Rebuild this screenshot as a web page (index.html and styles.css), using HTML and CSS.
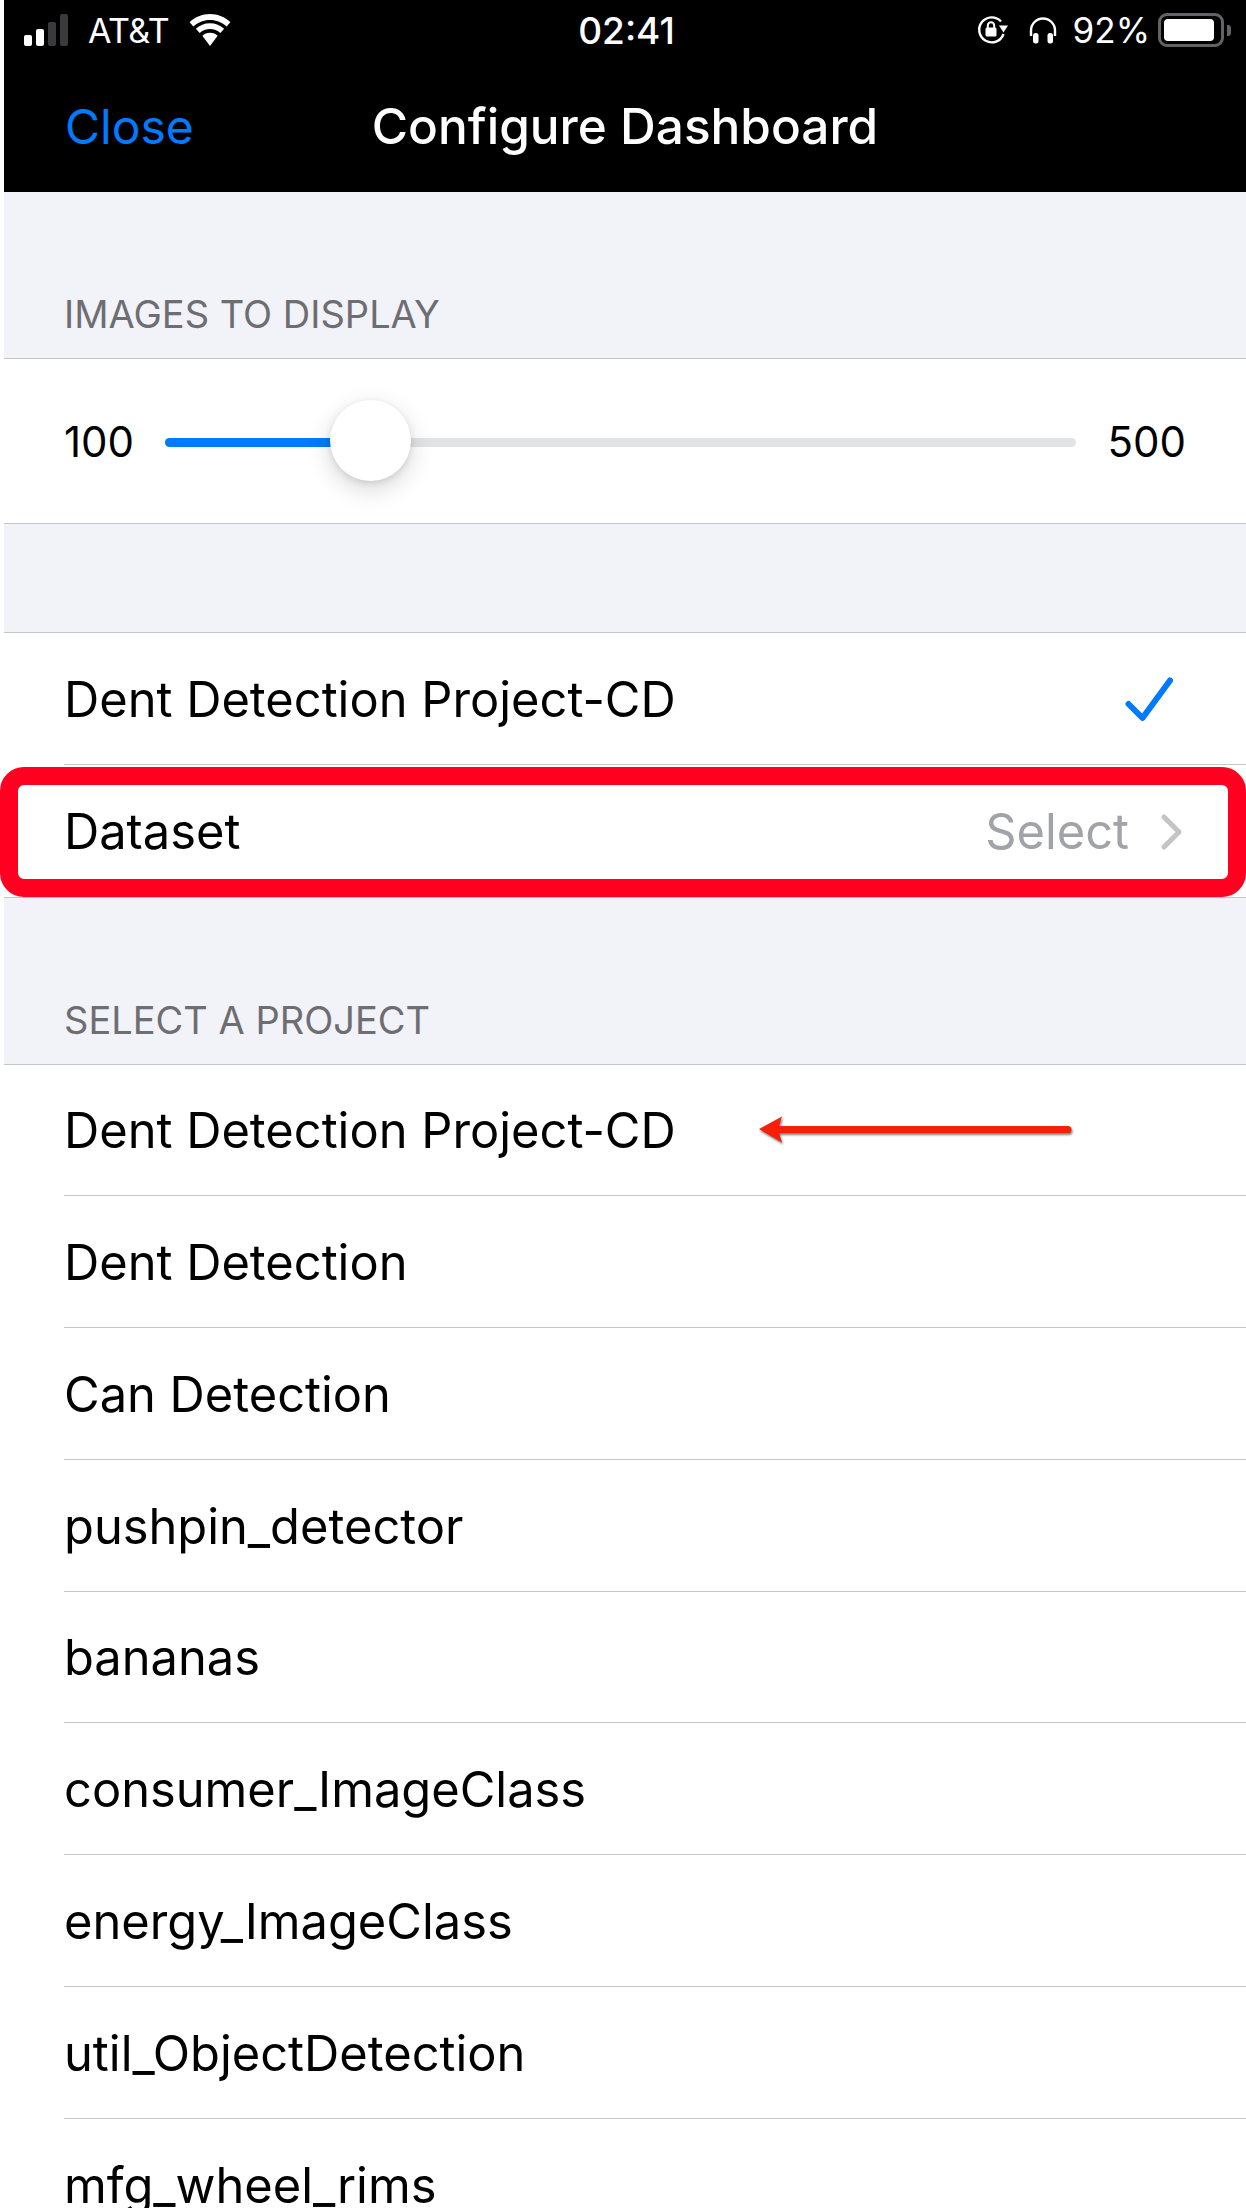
FILE: index.html
```html
<!DOCTYPE html>
<html lang="en">
  <head>
    <meta charset="UTF-8" />
    <meta name="viewport" content="width=device-width, initial-scale=1.0" />
    <title>Configure Dashboard</title>
    <link rel="stylesheet" href="styles.css">
  </head>
  <body>
    <header class="top">
      <div class="status">
        <div class="status-left">
          <span class="signal"><i class="on b1"></i><i class="on b2"></i><i class="b3"></i><i class="b4"></i></span>
          <span class="carrier">AT&amp;T</span>
          <svg class="wifi" width="46" height="34" viewBox="3 1 40 32">
            <path d="M23 7.500c6 0 11.500 2.300 15.600 6.200l3.600-4C37.100 4.800 30.400 2 23 2S8.900 4.800 3.800 9.700l3.600 4C11.500 9.800 17 7.500 23 7.500z" fill="#fff"/>
            <path d="M23 16c3.700 0 7.100 1.400 9.700 3.800l3.600-4C32.800 12.500 28.100 10.600 23 10.600s-9.800 1.900-13.300 5.200l3.600 4C15.900 17.400 19.300 16 23 16z" fill="#fff"/>
            <path d="M23 19.500c-2.800 0-5.300 1-7.200 2.800L23 32l7.200-9.700c-1.900-1.800-4.400-2.800-7.200-2.800z" fill="#fff"/>
          </svg>
        </div>
        <div class="clock">02:41</div>
        <div class="status-right">
          <svg class="rotlock" width="32" height="30" viewBox="0 0 32 30">
            <path d="M26.500 19A12.500 12.500 0 1 1 24 6.500" fill="none" stroke="#fff" stroke-width="2.400"/>
            <path d="M22 10.500h9l-4.500 7z" fill="#fff"/>
            <rect x="8.500" y="12.500" width="11" height="9" rx="1.500" fill="#fff"/>
            <path d="M10.800 13V10.500a3.200 3.200 0 0 1 6.400 0V13" fill="none" stroke="#fff" stroke-width="2"/>
          </svg>
          <svg class="phones" width="30" height="28" viewBox="0 0 30 28">
            <path d="M3 20V14.500a12 12 0 0 1 24 0V20" fill="none" stroke="#fff" stroke-width="2.400"/>
            <rect x="5" y="17" width="5.500" height="10.500" rx="2.500" fill="#fff"/>
            <rect x="19.500" y="17" width="5.500" height="10.500" rx="2.500" fill="#fff"/>
          </svg>
          <span class="pct">92%</span>
          <span class="battery"><span class="battery-fill"></span></span>
          <span class="battery-nub"></span>
        </div>
      </div>
      <div class="navbar">
        <a class="close">Close</a>
        <h1 class="title">Configure Dashboard</h1>
      </div>
    </header>

    <main>
      <div class="section-label first">IMAGES TO DISPLAY</div>
      <div class="group">
        <div class="slider-row">
          <span class="slider-val">100</span>
          <div class="slider">
            <div class="slider-done"></div>
            <div class="slider-thumb"></div>
          </div>
          <span class="slider-val">500</span>
        </div>
      </div>

      <div class="gap"></div>

      <div class="group">
        <div class="row">
          <div class="row-in">
            <span>Dent Detection Project-CD</span>
            <svg class="check" width="48" height="48" viewBox="0 0 48 48">
              <path d="M3.500 27l14 14L45 3.500" fill="none" stroke="#007aff" stroke-width="6" stroke-linecap="round" stroke-linejoin="round"/>
            </svg>
          </div>
        </div>
        <div class="row dataset">
          <div class="row-in">
            <span>Dataset</span>
            <span class="detail">Select</span>
            <svg class="chevron" width="24" height="38" viewBox="0 0 24 38">
              <path d="M4 4l15 15L4 34" fill="none" stroke="#c4c4c7" stroke-width="5" stroke-linecap="round" stroke-linejoin="round"/>
            </svg>
          </div>
          <div class="red-box"></div>
        </div>
      </div>

      <div class="section-label">SELECT A PROJECT</div>
      <div class="group">
        <div class="row">
          <div class="row-in">
            <span>Dent Detection Project-CD</span>
            <svg class="arrow" width="320" height="34" viewBox="0 0 320 34">
              <path d="M1 14L24 1.500l-3 9.500h289a3.500 3.500 0 0 1 0 7H21l3 9.500z" fill="#f61f08" class="arrow-shape"/>
            </svg>
          </div>
        </div>
        <div class="row"><div class="row-in"><span>Dent Detection</span></div></div>
        <div class="row"><div class="row-in"><span>Can Detection</span></div></div>
        <div class="row"><div class="row-in"><span>pushpin_detector</span></div></div>
        <div class="row"><div class="row-in"><span>bananas</span></div></div>
        <div class="row"><div class="row-in"><span>consumer_ImageClass</span></div></div>
        <div class="row"><div class="row-in"><span>energy_ImageClass</span></div></div>
        <div class="row"><div class="row-in"><span>util_ObjectDetection</span></div></div>
        <div class="row"><div class="row-in"><span>mfg_wheel_rims</span></div></div>
      </div>
    </main>
  </body>
</html>
```

FILE: styles.css
```css
/* page */
html, body {
  margin: 0;
  height: 2208px;
  overflow: hidden;
  background: #fff;
}
body {
  padding-left: 4px;
  box-sizing: border-box;
  font-family: Inter, "Liberation Sans", sans-serif;
  color: #000;
}

/* black header */
.top {
  background: #000;
  color: #fff;
  height: 192px;
}
.status {
  display: grid;
  grid-template-columns: 1fr auto 1fr;
  align-items: center;
  height: 60px;
  padding: 0 15px 0 20px;
}
.status-left, .status-right {
  display: flex;
  align-items: center;
}
.status-right {
  justify-content: flex-end;
}
.signal {
  display: flex;
  align-items: flex-end;
  gap: 4px;
  height: 32px;
}
.signal i {
  width: 8px;
  border-radius: 2px;
  background: #3a3a3c;
}
.signal .on {
  background: #fff;
}
.signal .b1 { height: 11px; }
.signal .b2 { height: 17px; }
.signal .b3 { height: 24px; }
.signal .b4 { height: 32px; }
.carrier {
  font-size: 34px;
  margin-left: 20px;
  letter-spacing: -0.5px;
}
.wifi {
  margin-left: 18px;
}
.clock {
  font-size: 37px;
  font-weight: 500;
  margin-right: 2px;
}
.rotlock {
  margin-right: 19px;
}
.phones {
  margin-right: 15px;
}
.pct {
  font-size: 35px;
  margin-right: 8px;
}
.battery {
  box-sizing: border-box;
  display: block;
  width: 66px;
  height: 34px;
  padding: 3px;
  border: 3px solid #636366;
  border-radius: 9px;
}
.battery-fill {
  display: block;
  height: 100%;
  width: 92%;
  background: #fff;
  border-radius: 4px;
}
.battery-nub {
  width: 4px;
  height: 11px;
  margin-left: 3px;
  background: #636366;
  border-radius: 0 3px 3px 0;
}
.navbar {
  display: grid;
  grid-template-columns: 1fr auto 1fr;
  align-items: center;
  height: 132px;
}
.close {
  color: #007aff;
  font-size: 48px;
  margin-left: 61px;
}
.title {
  margin: 0;
  font-size: 49.5px;
  font-weight: 500;
  grid-column: 2;
}

/* sections */
main {
  background: #f2f3f8;
}
.section-label {
  box-sizing: border-box;
  height: 166px;
  padding: 0 0 21px 60px;
  display: flex;
  align-items: flex-end;
  font-size: 38px;
  color: #6d6d72;
}
.gap {
  height: 108px;
}
.group {
  background: #fff;
  border-top: 1px solid #c6c6c8;
  border-bottom: 1px solid #c6c6c8;
}

/* slider */
.slider-row {
  display: flex;
  align-items: center;
  height: 164px;
  padding: 0 60px;
  font-size: 42px;
  gap: 31px;
}
.slider {
  position: relative;
  flex: 1;
  height: 9px;
  margin-top: 2px;
  border-radius: 5px;
  background: #e2e3e4;
}
.slider-done {
  width: 205px;
  height: 100%;
  background: #007aff;
  border-radius: 5px 0 0 5px;
}
.slider-thumb {
  position: absolute;
  left: 165px;
  top: -38px;
  width: 81px;
  height: 81px;
  border-radius: 50%;
  background: #fff;
  box-shadow: 0 8px 24px rgba(0, 0, 0, 0.16), 0 2px 6px rgba(0, 0, 0, 0.1);
}

/* rows */
.row {
  height: 131.75px;
  padding-left: 60px;
}
.row-in {
  position: relative;
  box-sizing: border-box;
  display: flex;
  align-items: center;
  height: 100%;
  font-size: 48.8px;
  border-bottom: 1px solid #c6c6c8;
  padding: 2px 62px 0 0;
}
.row:last-child .row-in {
  border-bottom: none;
}
.check {
  margin: 3px 11px 0 auto;
}
.detail {
  margin-left: auto;
  color: #a2a3a8;
}
.chevron {
  margin-left: 31px;
}
.dataset {
  position: relative;
}
.red-box {
  position: absolute;
  left: -4px;
  right: 0;
  top: 2px;
  bottom: 0;
  border: 18px solid #ff0021;
  border-radius: 24px;
}
.arrow {
  position: absolute;
  left: 694px;
  top: 50px;
}
.arrow-shape {
  filter: drop-shadow(1px 2px 1px rgba(40, 40, 40, 0.6));
}
```
